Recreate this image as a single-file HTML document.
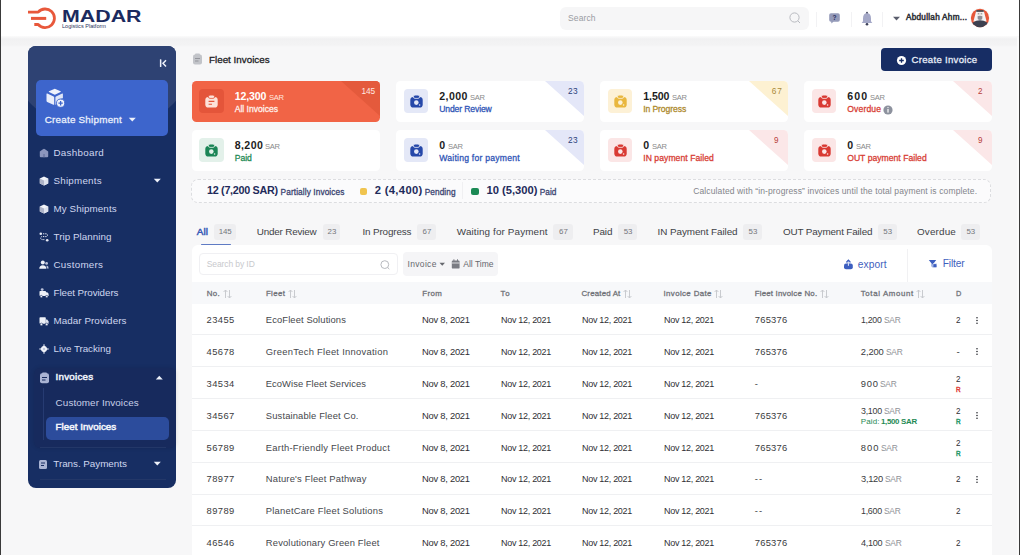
<!DOCTYPE html><html><head><meta charset="utf-8"><style>html,body{margin:0;padding:0}body{width:1020px;height:555px;overflow:hidden;position:relative;background:#f7f7f8;font-family:"Liberation Sans",sans-serif}</style></head><body>
<div style="position:absolute;left:0;top:36px;width:1020px;height:11px;background:linear-gradient(to bottom,#fbfbfb 0px,#f1f1f2 3px,#f3f3f4 9px,#f7f7f8 11px)"></div>
<div style="position:absolute;left:0;top:0;width:1020px;height:36px;background:#fff"></div>
<div style="position:absolute;left:0;top:0;width:1.3px;height:555px;background:#3a3a3a"></div>
<div style="position:absolute;left:1017.4px;top:37px;width:1.4px;height:518px;background:#fbfbfb"></div>
<div style="position:absolute;left:1018.8px;top:0;width:1.2px;height:555px;background:#3a3a3a"></div>
<svg style="position:absolute;left:26px;top:5px;" width="34" height="28" viewBox="0 0 34 28">
<path d="M2 7.1 H12.2 A9.3 9.3 0 1 1 12.2 19.5 H8.3" fill="none" stroke="#e8583b" stroke-width="2.8" stroke-linejoin="round"/>
<path d="M5 13.4 H20.2" fill="none" stroke="#e8583b" stroke-width="3"/>
</svg>
<svg style="position:absolute;left:60px;top:8px;" width="90" height="24" viewBox="0 0 90 24">
<text x="2" y="13.7" font-family="Liberation Sans" font-weight="700" font-size="16.5" fill="#1b2a5e" textLength="79.5" lengthAdjust="spacingAndGlyphs">MADAR</text>
<text x="2" y="20.3" font-family="Liberation Sans" font-weight="400" font-size="5.2" fill="#2c3560" textLength="44" lengthAdjust="spacingAndGlyphs">Logistics Platform</text>
</svg>
<div style="position:absolute;left:560px;top:6.5px;width:249px;height:23.5px;background:#f6f6f7;border-radius:6px;"></div>
<span style="position:absolute;left:568.00px;top:13.71px;font-size:8.5px;line-height:8.5px;font-weight:400;color:#9a9ca3;white-space:nowrap;letter-spacing:0.133px;">Search</span>
<svg style="position:absolute;left:788px;top:11px;" width="14" height="14" viewBox="0 0 14 14"><circle cx="6.5" cy="6.5" r="4.6" fill="none" stroke="#b8bac0" stroke-width="1"/><path d="M10 10 L12 12" stroke="#b8bac0" stroke-width="1"/></svg>
<div style="position:absolute;left:816px;top:12px;width:1px;height:15px;background:#f2f2f4;border-radius:0px;"></div>
<div style="position:absolute;left:851px;top:12px;width:1px;height:15px;background:#f2f2f4;border-radius:0px;"></div>
<div style="position:absolute;left:882px;top:12px;width:1px;height:15px;background:#f2f2f4;border-radius:0px;"></div>
<svg style="position:absolute;left:827.5px;top:12.2px;" width="13" height="13" viewBox="0 0 13 13"><path d="M1.2 3 Q1.2 1.2 3 1.2 H10 Q11.8 1.2 11.8 3 V8 Q11.8 9.8 10 9.8 H5.5 L3.3 11.6 V9.8 H3 Q1.2 9.8 1.2 8 Z" fill="#949ab9"/><text x="6.5" y="8.3" font-family="Liberation Sans" font-weight="700" font-size="6.6" fill="#27305e" text-anchor="middle">?</text></svg>
<svg style="position:absolute;left:861px;top:11px;" width="12" height="15" viewBox="0 0 12 15"><path d="M6 2 Q10 2.3 10 7.5 V10.3 L11.3 12 H0.7 L2 10.3 V7.5 Q2 2.3 6 2 Z" fill="#a4a8c7"/><circle cx="6" cy="13.3" r="1.3" fill="#3b3f58"/><circle cx="6" cy="1.6" r="0.9" fill="#3b3f58"/></svg>
<svg style="position:absolute;left:891.5px;top:15.8px;" width="9" height="6" viewBox="0 0 9 6"><path d="M1 0.8 H8 L4.5 4.5 Z" fill="#5a5d6c"/></svg>
<span style="position:absolute;left:906.00px;top:13.76px;font-size:8.2px;line-height:8.2px;font-weight:400;color:#303238;white-space:nowrap;letter-spacing:0.267px;-webkit-text-stroke:0.5px #303238;">Abdullah Ahm...</span>
<svg style="position:absolute;left:969.2px;top:7px;" width="22" height="22" viewBox="0 0 22 22">
<defs><clipPath id="av"><circle cx="11" cy="11" r="9.15"/></clipPath></defs>
<circle cx="11" cy="11" r="10.2" fill="#fafafa"/>
<circle cx="11" cy="11" r="9.15" fill="#e6583a"/>
<g clip-path="url(#av)">
<path d="M7.3 3.6 H14.7 L17.6 14.5 H4.4 Z" fill="#f3f3f4"/>
<rect x="7.2" y="3.2" width="7.6" height="1.5" rx="0.5" fill="#2b2c33"/>
<rect x="8.4" y="5.2" width="5.2" height="6.8" rx="1.5" fill="#efe9e4"/>
<path d="M8.8 6.8 H10.3 M11.7 6.8 H13.2" stroke="#55565e" stroke-width="0.7"/>
<path d="M8.6 9.3 Q11 8.4 13.4 9.3 L13.2 12.3 Q11 13.6 8.8 12.3 Z" fill="#8c8d95"/>
<path d="M0.5 23 Q1.5 13.6 11 13.3 Q20.5 13.6 21.5 23 Z" fill="#3d4150"/>
</g>
</svg>
<div style="position:absolute;left:28px;top:45.5px;width:148px;height:442px;border-radius:8px;overflow:hidden;background:#172e63"><div style="position:absolute;left:-25px;top:-109.5px;width:198px;height:198px;border-radius:50%;background:#2e4273"></div></div>
<svg style="position:absolute;left:158px;top:58px;" width="10" height="10" viewBox="0 0 10 10"><rect x="1.9" y="1.3" width="1.5" height="7.6" rx="0.5" fill="#eef1fa"/><path d="M8 2.2 L5 5.3 L8 8.4" fill="none" stroke="#eef1fa" stroke-width="1.5" stroke-linejoin="miter"/></svg>
<div style="position:absolute;left:36px;top:80px;width:132px;height:55.8px;background:#3d65cc;border-radius:5px;"></div>
<svg style="position:absolute;left:45px;top:88px;" width="21" height="20" viewBox="0 0 21 20">
<path d="M9.2 0.9 Q9.8 0.7 10.4 0.9 L15.6 3.3 Q16.2 3.7 15.6 4.1 L10.4 6.6 Q9.8 6.9 9.2 6.6 L4 4.1 Q3.4 3.7 4 3.3 Z" fill="#eef2fc"/>
<path d="M1.5 6 Q1.5 5.2 2.3 5.6 L8.6 8.4 Q9.2 8.7 9.2 9.4 V16.3 Q9.2 17.1 8.4 16.7 L2.2 13.9 Q1.5 13.5 1.5 12.8 Z" fill="#e9eefb"/>
<path d="M10.4 9.4 Q10.4 8.7 11 8.4 L17.2 5.6 Q17.9 5.3 17.9 6 V10.2 Q13 10.6 12 15.6 L11.2 16.6 Q10.4 17 10.4 16.2 Z" fill="#dfe6f8"/>
<circle cx="15.6" cy="15.2" r="4.1" fill="#eef2fc" stroke="#3d65cc" stroke-width="0.9"/>
<path d="M15.6 13 V17.4 M13.4 15.2 H17.8" stroke="#3d65cc" stroke-width="1.3"/>
</svg>
<span style="position:absolute;left:44.70px;top:114.50px;font-size:9.9px;line-height:9.9px;font-weight:400;color:#eaf0fc;white-space:nowrap;letter-spacing:0.214px;-webkit-text-stroke:0.28px #eaf0fc;">Create Shipment</span>
<svg style="position:absolute;left:128px;top:116.5px;" width="9" height="6" viewBox="0 0 9 6"><path d="M0.8 0.8 H7.8 L4.3 4.6 Z" fill="#eef2fb"/></svg>
<span style="position:absolute;left:53.50px;top:147.55px;font-size:9.8px;line-height:9.8px;font-weight:400;color:#cfd6ef;white-space:nowrap;letter-spacing:0.295px;">Dashboard</span>
<svg style="position:absolute;left:38.5px;top:147.7px;" width="10" height="10" viewBox="0 0 10 10"><path d="M5 0.8 Q5.5 0.8 6 1.2 L9.2 3.6 V8.2 Q9.2 9.2 8.2 9.2 H1.8 Q0.8 9.2 0.8 8.2 V3.6 L4 1.2 Q4.5 0.8 5 0.8 Z" fill="#8c96bd"/><rect x="4.2" y="6" width="1.6" height="3.2" fill="#6f7aa6"/></svg>
<span style="position:absolute;left:53.50px;top:175.85px;font-size:9.8px;line-height:9.8px;font-weight:400;color:#cfd6ef;white-space:nowrap;letter-spacing:0.225px;">Shipments</span>
<svg style="position:absolute;left:38.5px;top:176.0px;" width="10" height="10" viewBox="0 0 10 10"><path d="M5 0.6 L9.2 2.6 V7.4 L5 9.4 L0.8 7.4 V2.6 Z" fill="#f2f4fa"/><path d="M0.8 2.6 L5 4.6 V9.4 L0.8 7.4 Z" fill="#aeb4c8"/><path d="M5 4.6 L9.2 2.6 V7.4 L5 9.4 Z" fill="#dfe3ee"/></svg>
<span style="position:absolute;left:53.50px;top:203.95px;font-size:9.8px;line-height:9.8px;font-weight:400;color:#cfd6ef;white-space:nowrap;letter-spacing:0.093px;">My Shipments</span>
<svg style="position:absolute;left:38.5px;top:204.1px;" width="10" height="10" viewBox="0 0 10 10"><path d="M5 0.6 L9.2 2.6 V7.4 L5 9.4 L0.8 7.4 V2.6 Z" fill="#f2f4fa"/><path d="M0.8 2.6 L5 4.6 V9.4 L0.8 7.4 Z" fill="#aeb4c8"/><path d="M5 4.6 L9.2 2.6 V7.4 L5 9.4 Z" fill="#dfe3ee"/></svg>
<span style="position:absolute;left:53.50px;top:231.85px;font-size:9.8px;line-height:9.8px;font-weight:400;color:#cfd6ef;white-space:nowrap;letter-spacing:0.044px;">Trip Planning</span>
<svg style="position:absolute;left:38.5px;top:232.0px;" width="10" height="10" viewBox="0 0 10 10"><circle cx="1.8" cy="1.8" r="1.3" fill="#e6eaf5"/><circle cx="8.2" cy="8.2" r="1.3" fill="#e6eaf5"/><path d="M4 1.8 H7 Q8.5 1.8 8.5 3.2 Q8.5 4.6 7 4.6 H3.2 Q1.7 4.6 1.7 6.1 Q1.7 7.6 3.2 7.6 H6" fill="none" stroke="#e6eaf5" stroke-width="1" stroke-dasharray="1.3 0.9"/></svg>
<span style="position:absolute;left:53.50px;top:259.95px;font-size:9.8px;line-height:9.8px;font-weight:400;color:#cfd6ef;white-space:nowrap;letter-spacing:0.266px;">Customers</span>
<svg style="position:absolute;left:38.5px;top:260.09999999999997px;" width="10" height="10" viewBox="0 0 10 10"><circle cx="3.8" cy="2.6" r="2" fill="#eef1f8"/><path d="M0.3 8.8 Q0.3 5.3 3.8 5.3 Q7.3 5.3 7.3 8.8 Z" fill="#eef1f8"/><circle cx="7.6" cy="3.4" r="1.4" fill="#b9c0d8"/><path d="M7.5 5.6 Q9.7 5.8 9.7 8.6 H7.8 Z" fill="#b9c0d8"/></svg>
<span style="position:absolute;left:53.50px;top:288.05px;font-size:9.8px;line-height:9.8px;font-weight:400;color:#cfd6ef;white-space:nowrap;letter-spacing:-0.064px;">Fleet Providers</span>
<svg style="position:absolute;left:38.5px;top:288.2px;" width="10" height="10" viewBox="0 0 10 10"><rect x="0.5" y="3" width="6.5" height="5" rx="0.8" fill="#eef1f8"/><path d="M7 4.2 H8.3 L9.6 5.8 V8 H7 Z" fill="#eef1f8"/><circle cx="2.3" cy="8.6" r="1.2" fill="#eef1f8" stroke="#192d63" stroke-width="0.6"/><circle cx="7.8" cy="8.6" r="1.2" fill="#eef1f8" stroke="#192d63" stroke-width="0.6"/><circle cx="3.2" cy="1.6" r="1.4" fill="#b9c0d8"/></svg>
<span style="position:absolute;left:53.50px;top:315.85px;font-size:9.8px;line-height:9.8px;font-weight:400;color:#cfd6ef;white-space:nowrap;letter-spacing:0.073px;">Madar Providers</span>
<svg style="position:absolute;left:38.5px;top:316.0px;" width="10" height="10" viewBox="0 0 10 10"><rect x="0.5" y="1.2" width="6.3" height="6.6" rx="0.8" fill="#eef1f8"/><path d="M6.8 3.5 H8.2 L9.6 5.4 V7.8 H6.8 Z" fill="#dfe3ee"/><circle cx="2.4" cy="8.4" r="1.3" fill="#eef1f8" stroke="#192d63" stroke-width="0.6"/><circle cx="7.7" cy="8.4" r="1.3" fill="#eef1f8" stroke="#192d63" stroke-width="0.6"/></svg>
<span style="position:absolute;left:53.50px;top:343.85px;font-size:9.8px;line-height:9.8px;font-weight:400;color:#cfd6ef;white-space:nowrap;letter-spacing:-0.028px;">Live Tracking</span>
<svg style="position:absolute;left:38.5px;top:344.0px;" width="10" height="10" viewBox="0 0 10 10"><path d="M5 0.2 V9.8 M0.2 5 H9.8" stroke="#dfe4f2" stroke-width="1.1"/><path d="M5 1.4 L8.6 5 L5 8.6 L1.4 5 Z" fill="#eef1f8"/><circle cx="5" cy="5" r="2.9" fill="#eef1f8"/><circle cx="5" cy="5" r="1.1" fill="#b9c0d8"/></svg>
<svg style="position:absolute;left:153px;top:178px;" width="9" height="6" viewBox="0 0 9 6"><path d="M0.8 0.8 H7.8 L4.3 4.6 Z" fill="#eef2fb"/></svg>
<div style="position:absolute;left:34.3px;top:367.6px;width:141.5px;height:80px;background:#172a5d;border-radius:6px;box-shadow:0 0 4px rgba(0,0,0,0.12)"></div>
<svg style="position:absolute;left:38.5px;top:371.5px;" width="11" height="12" viewBox="0 0 11 12"><rect x="1" y="1.3" width="9" height="10" rx="2" fill="#a9b3d3"/><rect x="3" y="0.5" width="5" height="2" rx="1" fill="#a9b3d3"/><path d="M3 5.5 H8 M3 8 H6.5" stroke="#172a5d" stroke-width="1"/></svg>
<span style="position:absolute;left:55.60px;top:372.35px;font-size:9.8px;line-height:9.8px;font-weight:400;color:#eef2fb;white-space:nowrap;letter-spacing:0.235px;-webkit-text-stroke:0.5px #eef2fb;">Invoices</span>
<svg style="position:absolute;left:155px;top:374.5px;" width="9" height="6" viewBox="0 0 9 6"><path d="M0.8 4.6 H7.8 L4.3 0.8 Z" fill="#eef2fb"/></svg>
<div style="position:absolute;left:42.8px;top:388px;width:1px;height:52px;background:#263b72;border-radius:0px;"></div>
<span style="position:absolute;left:55.60px;top:398.00px;font-size:9.9px;line-height:9.9px;font-weight:400;color:#c9d0e8;white-space:nowrap;letter-spacing:0.082px;">Customer Invoices</span>
<div style="position:absolute;left:45.7px;top:416.5px;width:123px;height:23.2px;background:#2c4c9c;border-radius:5px;"></div>
<span style="position:absolute;left:55.60px;top:421.85px;font-size:9.8px;line-height:9.8px;font-weight:400;color:#f4f6fc;white-space:nowrap;letter-spacing:0.011px;-webkit-text-stroke:0.5px #f4f6fc;">Fleet Invoices</span>
<div style="position:absolute;left:40px;top:446.5px;width:126px;height:1px;background:#233768;border-radius:0px;"></div>
<svg style="position:absolute;left:38px;top:458.5px;" width="11" height="11" viewBox="0 0 11 11"><rect x="1" y="1" width="8" height="9" rx="1.5" fill="#a9b3d3"/><path d="M3 4 H7 M3 6.5 H6" stroke="#192d63" stroke-width="1"/></svg>
<span style="position:absolute;left:53.30px;top:458.80px;font-size:9.9px;line-height:9.9px;font-weight:400;color:#cfd6ef;white-space:nowrap;letter-spacing:-0.049px;">Trans. Payments</span>
<svg style="position:absolute;left:153px;top:461px;" width="9" height="6" viewBox="0 0 9 6"><path d="M0.8 0.8 H7.8 L4.3 4.6 Z" fill="#eef2fb"/></svg>
<div style="position:absolute;left:40px;top:479.2px;width:126px;height:1px;background:#233768;border-radius:0px;"></div>
<svg style="position:absolute;left:192px;top:53px;" width="11" height="12" viewBox="0 0 11 12"><rect x="1" y="1.5" width="9" height="10" rx="2" fill="#c2c4c9"/><rect x="3" y="0.5" width="5" height="2.2" rx="1" fill="#c2c4c9"/><path d="M3 5.5 H8 M3 8 H6.5" stroke="#8e9096" stroke-width="0.9"/></svg>
<span style="position:absolute;left:209.00px;top:54.50px;font-size:9.8px;line-height:9.8px;font-weight:400;color:#202124;white-space:nowrap;letter-spacing:0.011px;-webkit-text-stroke:0.28px #202124;">Fleet Invoices</span>
<div style="position:absolute;left:881px;top:48.1px;width:111px;height:22.7px;background:#172d64;border-radius:4px;"></div>
<svg style="position:absolute;left:896px;top:55px;" width="11" height="11" viewBox="0 0 11 11"><circle cx="5.5" cy="5.5" r="4.6" fill="#fff"/><path d="M5.5 3.2 V7.8 M3.2 5.5 H7.8" stroke="#172d64" stroke-width="1.3"/></svg>
<span style="position:absolute;left:911.50px;top:54.55px;font-size:9.6px;line-height:9.6px;font-weight:400;color:#e8edf8;white-space:nowrap;letter-spacing:0.288px;-webkit-text-stroke:0.28px #e8edf8;">Create Invoice</span>
<div style="position:absolute;left:191.5px;top:81px;width:188px;height:41px;background:#f16446;border-radius:4.5px;overflow:hidden"><svg style="position:absolute;right:0;top:0" width="40" height="36"><path d="M1 0 H40 V35 Z" fill="#e45a3c"/></svg></div>
<div style="position:absolute;left:199.2px;top:89.1px;width:24.8px;height:24.3px;background:#e4553a;border-radius:4px;"></div>
<svg style="position:absolute;left:205.4px;top:95.2px;" width="13" height="14" viewBox="0 0 13 14"><path d="M0.3 5 Q0.3 1.9 3.4 1.9 H9.6 Q12.7 1.9 12.7 5 V9.4 Q12.7 12.5 9.6 12.5 H3.4 Q0.3 12.5 0.3 9.4 Z" fill="#fde3da"/><rect x="3.4" y="0.1" width="6.2" height="3.3" rx="1.6" fill="#fde3da" stroke="#e4553a" stroke-width="0.8"/><path d="M3.6 6.4 H9.4 M3.6 9.2 H7" stroke="#e4553a" stroke-width="1.1"/></svg>
<span style="position:absolute;left:234.70px;top:91.45px;font-size:10.6px;line-height:10.6px;font-weight:700;color:#fff;white-space:nowrap;letter-spacing:-0.121px;">12,300</span>
<span style="position:absolute;left:268.90px;top:93.86px;font-size:7.8px;line-height:7.8px;font-weight:400;color:#ffe7df;white-space:nowrap;letter-spacing:-0.300px;transform:scaleX(0.9766);transform-origin:0 50%;">SAR</span>
<span style="position:absolute;left:234.70px;top:104.76px;font-size:8.6px;line-height:8.6px;font-weight:400;color:#fff1ec;white-space:nowrap;letter-spacing:-0.006px;-webkit-text-stroke:0.28px #fff1ec;">All Invoices</span>
<span style="position:absolute;left:361.50px;top:86.61px;font-size:8.3px;line-height:8.3px;font-weight:400;color:#ffe9e2;white-space:nowrap;letter-spacing:-0.122px;">145</span>
<div style="position:absolute;left:396px;top:81px;width:188px;height:41px;background:#fff;border-radius:4.5px;overflow:hidden"><svg style="position:absolute;right:0;top:0" width="40" height="36"><path d="M1 0 H40 V35 Z" fill="#e4e7f8"/></svg></div>
<div style="position:absolute;left:403.7px;top:89.1px;width:24.8px;height:24.3px;background:#e4e8f7;border-radius:4px;"></div>
<svg style="position:absolute;left:409.9px;top:95.2px;" width="13" height="14" viewBox="0 0 13 14"><path d="M0.3 5 Q0.3 1.9 3.4 1.9 H9.6 Q12.7 1.9 12.7 5 V9.4 Q12.7 12.5 9.6 12.5 H3.4 Q0.3 12.5 0.3 9.4 Z" fill="#2648a9"/><rect x="3.4" y="0.1" width="6.2" height="3.3" rx="1.6" fill="#2648a9" stroke="#e4e8f7" stroke-width="0.8"/><circle cx="6.3" cy="7.6" r="2.3" fill="#e4e8f7"/><circle cx="9.6" cy="10" r="0.8" fill="#e4e8f7"/></svg>
<span style="position:absolute;left:439.20px;top:91.45px;font-size:10.6px;line-height:10.6px;font-weight:700;color:#1c1c1c;white-space:nowrap;letter-spacing:0.446px;">2,000</span>
<span style="position:absolute;left:469.90px;top:93.86px;font-size:7.8px;line-height:7.8px;font-weight:400;color:#8a8a8a;white-space:nowrap;letter-spacing:-0.300px;transform:scaleX(0.9766);transform-origin:0 50%;">SAR</span>
<span style="position:absolute;left:439.20px;top:104.76px;font-size:8.6px;line-height:8.6px;font-weight:400;color:#2f55b6;white-space:nowrap;letter-spacing:-0.126px;-webkit-text-stroke:0.28px #2f55b6;">Under Review</span>
<span style="position:absolute;left:568.00px;top:86.61px;font-size:8.3px;line-height:8.3px;font-weight:400;color:#2a3f7a;white-space:nowrap;letter-spacing:0.366px;">23</span>
<div style="position:absolute;left:600px;top:81px;width:188px;height:41px;background:#fff;border-radius:4.5px;overflow:hidden"><svg style="position:absolute;right:0;top:0" width="40" height="36"><path d="M1 0 H40 V35 Z" fill="#fdf1d2"/></svg></div>
<div style="position:absolute;left:607.7px;top:89.1px;width:24.8px;height:24.3px;background:#fdf1d6;border-radius:4px;"></div>
<svg style="position:absolute;left:613.9px;top:95.2px;" width="13" height="14" viewBox="0 0 13 14"><path d="M0.3 5 Q0.3 1.9 3.4 1.9 H9.6 Q12.7 1.9 12.7 5 V9.4 Q12.7 12.5 9.6 12.5 H3.4 Q0.3 12.5 0.3 9.4 Z" fill="#e9b73e"/><rect x="3.4" y="0.1" width="6.2" height="3.3" rx="1.6" fill="#e9b73e" stroke="#fdf1d6" stroke-width="0.8"/><circle cx="6.3" cy="7.6" r="2.3" fill="#fdf1d6"/><circle cx="9.6" cy="10" r="0.8" fill="#fdf1d6"/></svg>
<span style="position:absolute;left:643.20px;top:91.45px;font-size:10.6px;line-height:10.6px;font-weight:700;color:#1c1c1c;white-space:nowrap;letter-spacing:-0.054px;">1,500</span>
<span style="position:absolute;left:671.90px;top:93.86px;font-size:7.8px;line-height:7.8px;font-weight:400;color:#8a8a8a;white-space:nowrap;letter-spacing:-0.300px;transform:scaleX(0.9766);transform-origin:0 50%;">SAR</span>
<span style="position:absolute;left:643.20px;top:104.76px;font-size:8.6px;line-height:8.6px;font-weight:400;color:#ad892c;white-space:nowrap;letter-spacing:-0.095px;-webkit-text-stroke:0.28px #ad892c;">In Progress</span>
<span style="position:absolute;left:771.65px;top:86.61px;font-size:8.3px;line-height:8.3px;font-weight:400;color:#a98a3a;white-space:nowrap;letter-spacing:1.066px;">67</span>
<div style="position:absolute;left:804px;top:81px;width:188px;height:41px;background:#fff;border-radius:4.5px;overflow:hidden"><svg style="position:absolute;right:0;top:0" width="40" height="36"><path d="M1 0 H40 V35 Z" fill="#fbe7e8"/></svg></div>
<div style="position:absolute;left:811.7px;top:89.1px;width:24.8px;height:24.3px;background:#fbe6e6;border-radius:4px;"></div>
<svg style="position:absolute;left:817.9px;top:95.2px;" width="13" height="14" viewBox="0 0 13 14"><path d="M0.3 5 Q0.3 1.9 3.4 1.9 H9.6 Q12.7 1.9 12.7 5 V9.4 Q12.7 12.5 9.6 12.5 H3.4 Q0.3 12.5 0.3 9.4 Z" fill="#d93a33"/><rect x="3.4" y="0.1" width="6.2" height="3.3" rx="1.6" fill="#d93a33" stroke="#fbe6e6" stroke-width="0.8"/><circle cx="6.3" cy="7.6" r="2.3" fill="#fbe6e6"/><circle cx="9.6" cy="10" r="0.8" fill="#fbe6e6"/></svg>
<span style="position:absolute;left:847.20px;top:91.45px;font-size:10.6px;line-height:10.6px;font-weight:700;color:#1c1c1c;white-space:nowrap;letter-spacing:1.200px;">600</span>
<span style="position:absolute;left:870.00px;top:93.86px;font-size:7.8px;line-height:7.8px;font-weight:400;color:#8a8a8a;white-space:nowrap;letter-spacing:-0.300px;transform:scaleX(0.9766);transform-origin:0 50%;">SAR</span>
<span style="position:absolute;left:847.20px;top:104.76px;font-size:8.6px;line-height:8.6px;font-weight:400;color:#d73d34;white-space:nowrap;letter-spacing:0.155px;-webkit-text-stroke:0.28px #d73d34;">Overdue</span>
<span style="position:absolute;left:978.25px;top:86.61px;font-size:8.3px;line-height:8.3px;font-weight:400;color:#b8403a;white-space:nowrap;transform:scaleX(0.9730);transform-origin:0 50%;">2</span>
<div style="position:absolute;left:191.5px;top:130px;width:188px;height:40.5px;background:#fff;border-radius:4.5px;overflow:hidden"></div>
<div style="position:absolute;left:199.2px;top:138.1px;width:24.8px;height:24.3px;background:#e3f1ea;border-radius:4px;"></div>
<svg style="position:absolute;left:205.4px;top:144.2px;" width="13" height="14" viewBox="0 0 13 14"><path d="M0.3 5 Q0.3 1.9 3.4 1.9 H9.6 Q12.7 1.9 12.7 5 V9.4 Q12.7 12.5 9.6 12.5 H3.4 Q0.3 12.5 0.3 9.4 Z" fill="#1b8556"/><rect x="3.4" y="0.1" width="6.2" height="3.3" rx="1.6" fill="#1b8556" stroke="#e3f1ea" stroke-width="0.8"/><circle cx="6.3" cy="7.6" r="2.3" fill="#e3f1ea"/><circle cx="9.6" cy="10" r="0.8" fill="#e3f1ea"/></svg>
<span style="position:absolute;left:234.70px;top:140.45px;font-size:10.6px;line-height:10.6px;font-weight:700;color:#1c1c1c;white-space:nowrap;letter-spacing:0.421px;">8,200</span>
<span style="position:absolute;left:265.30px;top:142.86px;font-size:7.8px;line-height:7.8px;font-weight:400;color:#8a8a8a;white-space:nowrap;letter-spacing:-0.300px;transform:scaleX(0.9766);transform-origin:0 50%;">SAR</span>
<span style="position:absolute;left:234.70px;top:153.76px;font-size:8.6px;line-height:8.6px;font-weight:400;color:#1f8a55;white-space:nowrap;letter-spacing:-0.034px;-webkit-text-stroke:0.28px #1f8a55;">Paid</span>
<div style="position:absolute;left:396px;top:130px;width:188px;height:40.5px;background:#fff;border-radius:4.5px;overflow:hidden"><svg style="position:absolute;right:0;top:0" width="40" height="36"><path d="M1 0 H40 V35 Z" fill="#e4e7f8"/></svg></div>
<div style="position:absolute;left:403.7px;top:138.1px;width:24.8px;height:24.3px;background:#e4e8f7;border-radius:4px;"></div>
<svg style="position:absolute;left:409.9px;top:144.2px;" width="13" height="14" viewBox="0 0 13 14"><path d="M0.3 5 Q0.3 1.9 3.4 1.9 H9.6 Q12.7 1.9 12.7 5 V9.4 Q12.7 12.5 9.6 12.5 H3.4 Q0.3 12.5 0.3 9.4 Z" fill="#2648a9"/><rect x="3.4" y="0.1" width="6.2" height="3.3" rx="1.6" fill="#2648a9" stroke="#e4e8f7" stroke-width="0.8"/><circle cx="6.3" cy="7.6" r="2.3" fill="#e4e8f7"/><circle cx="9.6" cy="10" r="0.8" fill="#e4e8f7"/></svg>
<span style="position:absolute;left:439.20px;top:140.45px;font-size:10.6px;line-height:10.6px;font-weight:700;color:#1c1c1c;white-space:nowrap;">0</span>
<span style="position:absolute;left:448.40px;top:142.86px;font-size:7.8px;line-height:7.8px;font-weight:400;color:#8a8a8a;white-space:nowrap;letter-spacing:-0.300px;transform:scaleX(0.9766);transform-origin:0 50%;">SAR</span>
<span style="position:absolute;left:439.20px;top:153.76px;font-size:8.6px;line-height:8.6px;font-weight:400;color:#2f55b6;white-space:nowrap;letter-spacing:0.244px;-webkit-text-stroke:0.28px #2f55b6;">Waiting for payment</span>
<span style="position:absolute;left:568.00px;top:135.61px;font-size:8.3px;line-height:8.3px;font-weight:400;color:#2a3f7a;white-space:nowrap;letter-spacing:0.366px;">23</span>
<div style="position:absolute;left:600px;top:130px;width:188px;height:40.5px;background:#fff;border-radius:4.5px;overflow:hidden"><svg style="position:absolute;right:0;top:0" width="40" height="36"><path d="M1 0 H40 V35 Z" fill="#fbe7e8"/></svg></div>
<div style="position:absolute;left:607.7px;top:138.1px;width:24.8px;height:24.3px;background:#fbe6e6;border-radius:4px;"></div>
<svg style="position:absolute;left:613.9px;top:144.2px;" width="13" height="14" viewBox="0 0 13 14"><path d="M0.3 5 Q0.3 1.9 3.4 1.9 H9.6 Q12.7 1.9 12.7 5 V9.4 Q12.7 12.5 9.6 12.5 H3.4 Q0.3 12.5 0.3 9.4 Z" fill="#d93a33"/><rect x="3.4" y="0.1" width="6.2" height="3.3" rx="1.6" fill="#d93a33" stroke="#fbe6e6" stroke-width="0.8"/><circle cx="6.3" cy="7.6" r="2.3" fill="#fbe6e6"/><circle cx="9.6" cy="10" r="0.8" fill="#fbe6e6"/></svg>
<span style="position:absolute;left:643.20px;top:140.45px;font-size:10.6px;line-height:10.6px;font-weight:700;color:#1c1c1c;white-space:nowrap;">0</span>
<span style="position:absolute;left:652.40px;top:142.86px;font-size:7.8px;line-height:7.8px;font-weight:400;color:#8a8a8a;white-space:nowrap;letter-spacing:-0.300px;transform:scaleX(0.9766);transform-origin:0 50%;">SAR</span>
<span style="position:absolute;left:643.20px;top:153.76px;font-size:8.6px;line-height:8.6px;font-weight:400;color:#d73d34;white-space:nowrap;letter-spacing:0.059px;-webkit-text-stroke:0.28px #d73d34;">IN payment Failed</span>
<span style="position:absolute;left:774.25px;top:135.61px;font-size:8.3px;line-height:8.3px;font-weight:400;color:#b8403a;white-space:nowrap;transform:scaleX(0.9730);transform-origin:0 50%;">9</span>
<div style="position:absolute;left:804px;top:130px;width:188px;height:40.5px;background:#fff;border-radius:4.5px;overflow:hidden"><svg style="position:absolute;right:0;top:0" width="40" height="36"><path d="M1 0 H40 V35 Z" fill="#fbe7e8"/></svg></div>
<div style="position:absolute;left:811.7px;top:138.1px;width:24.8px;height:24.3px;background:#fbe6e6;border-radius:4px;"></div>
<svg style="position:absolute;left:817.9px;top:144.2px;" width="13" height="14" viewBox="0 0 13 14"><path d="M0.3 5 Q0.3 1.9 3.4 1.9 H9.6 Q12.7 1.9 12.7 5 V9.4 Q12.7 12.5 9.6 12.5 H3.4 Q0.3 12.5 0.3 9.4 Z" fill="#d93a33"/><rect x="3.4" y="0.1" width="6.2" height="3.3" rx="1.6" fill="#d93a33" stroke="#fbe6e6" stroke-width="0.8"/><circle cx="6.3" cy="7.6" r="2.3" fill="#fbe6e6"/><circle cx="9.6" cy="10" r="0.8" fill="#fbe6e6"/></svg>
<span style="position:absolute;left:847.20px;top:140.45px;font-size:10.6px;line-height:10.6px;font-weight:700;color:#1c1c1c;white-space:nowrap;">0</span>
<span style="position:absolute;left:856.40px;top:142.86px;font-size:7.8px;line-height:7.8px;font-weight:400;color:#8a8a8a;white-space:nowrap;letter-spacing:-0.300px;transform:scaleX(0.9766);transform-origin:0 50%;">SAR</span>
<span style="position:absolute;left:847.20px;top:153.76px;font-size:8.6px;line-height:8.6px;font-weight:400;color:#d73d34;white-space:nowrap;letter-spacing:0.021px;-webkit-text-stroke:0.28px #d73d34;">OUT payment Failed</span>
<span style="position:absolute;left:978.25px;top:135.61px;font-size:8.3px;line-height:8.3px;font-weight:400;color:#b8403a;white-space:nowrap;transform:scaleX(0.9730);transform-origin:0 50%;">9</span>
<svg style="position:absolute;left:883px;top:104.5px;" width="10" height="10" viewBox="0 0 10 10"><circle cx="5" cy="5" r="4.6" fill="#8d929e"/><rect x="4.4" y="4" width="1.2" height="3.6" fill="#fff"/><circle cx="5" cy="2.6" r="0.7" fill="#fff"/></svg>
<div style="position:absolute;left:191px;top:178.8px;width:800px;height:24px;border:1px dashed #dcdde0;border-radius:7px;background:#fbfbfc;box-sizing:border-box"></div>
<span style="position:absolute;left:207.00px;top:185.14px;font-size:11.2px;line-height:11.2px;font-weight:700;color:#1f2b5b;white-space:nowrap;letter-spacing:-0.300px;transform:scaleX(0.9627);transform-origin:0 50%;">12 (7,200 SAR)</span>
<span style="position:absolute;left:280.60px;top:187.51px;font-size:8.3px;line-height:8.3px;font-weight:400;color:#3a4470;white-space:nowrap;letter-spacing:0.090px;-webkit-text-stroke:0.28px #3a4470;">Partially Invoices</span>
<div style="position:absolute;left:360px;top:188px;width:7.4px;height:7.4px;background:#f0c44f;border-radius:2px;"></div>
<span style="position:absolute;left:374.70px;top:185.14px;font-size:11.2px;line-height:11.2px;font-weight:700;color:#1f2b5b;white-space:nowrap;letter-spacing:0.352px;">2 (4,400)</span>
<span style="position:absolute;left:424.70px;top:187.51px;font-size:8.3px;line-height:8.3px;font-weight:400;color:#3a4470;white-space:nowrap;letter-spacing:0.074px;-webkit-text-stroke:0.28px #3a4470;">Pending</span>
<div style="position:absolute;left:462.4px;top:182px;width:1px;height:17px;background:#f0f0f2;border-radius:0px;"></div>
<div style="position:absolute;left:471.2px;top:187.8px;width:7.4px;height:7.4px;background:#1c8a55;border-radius:2px;"></div>
<span style="position:absolute;left:486.50px;top:185.14px;font-size:11.2px;line-height:11.2px;font-weight:700;color:#1f2b5b;white-space:nowrap;letter-spacing:-0.011px;">10 (5,300)</span>
<span style="position:absolute;left:539.70px;top:187.51px;font-size:8.3px;line-height:8.3px;font-weight:400;color:#3a4470;white-space:nowrap;letter-spacing:0.064px;-webkit-text-stroke:0.28px #3a4470;">Paid</span>
<span style="position:absolute;left:693.20px;top:187.01px;font-size:8.5px;line-height:8.5px;font-weight:400;color:#83858b;white-space:nowrap;letter-spacing:0.127px;">Calculated with “in-progress” invoices until the total payment is complete.</span>
<span style="position:absolute;left:196.80px;top:226.60px;font-size:9.9px;line-height:9.9px;font-weight:400;color:#3a5ab6;white-space:nowrap;letter-spacing:0.108px;-webkit-text-stroke:0.5px #3a5ab6;">All</span>
<div style="position:absolute;left:213.7px;top:224px;width:21.900000000000006px;height:15.7px;background:#eeeef0;border-radius:3px;"></div>
<span style="position:absolute;left:218.74px;top:227.61px;font-size:7.9px;line-height:7.9px;font-weight:400;color:#75777d;white-space:nowrap;letter-spacing:-0.091px;">145</span>
<span style="position:absolute;left:256.80px;top:226.60px;font-size:9.9px;line-height:9.9px;font-weight:400;color:#404246;white-space:nowrap;letter-spacing:-0.203px;">Under Review</span>
<div style="position:absolute;left:322.6px;top:224px;width:17.69999999999999px;height:15.7px;background:#eeeef0;border-radius:3px;"></div>
<span style="position:absolute;left:327.61px;top:227.61px;font-size:7.9px;line-height:7.9px;font-weight:400;color:#75777d;white-space:nowrap;letter-spacing:0.079px;">23</span>
<span style="position:absolute;left:362.40px;top:226.60px;font-size:9.9px;line-height:9.9px;font-weight:400;color:#404246;white-space:nowrap;letter-spacing:-0.140px;">In Progress</span>
<div style="position:absolute;left:417px;top:224px;width:18.899999999999977px;height:15.7px;background:#eeeef0;border-radius:3px;"></div>
<span style="position:absolute;left:422.61px;top:227.61px;font-size:7.9px;line-height:7.9px;font-weight:400;color:#75777d;white-space:nowrap;letter-spacing:0.079px;">67</span>
<span style="position:absolute;left:456.80px;top:226.60px;font-size:9.9px;line-height:9.9px;font-weight:400;color:#404246;white-space:nowrap;letter-spacing:0.125px;">Waiting for Payment</span>
<div style="position:absolute;left:553px;top:224px;width:19.600000000000023px;height:15.7px;background:#eeeef0;border-radius:3px;"></div>
<span style="position:absolute;left:558.96px;top:227.61px;font-size:7.9px;line-height:7.9px;font-weight:400;color:#75777d;white-space:nowrap;letter-spacing:0.079px;">67</span>
<span style="position:absolute;left:593.00px;top:226.60px;font-size:9.9px;line-height:9.9px;font-weight:400;color:#404246;white-space:nowrap;letter-spacing:-0.122px;">Paid</span>
<div style="position:absolute;left:618.2px;top:224px;width:18.59999999999991px;height:15.7px;background:#eeeef0;border-radius:3px;"></div>
<span style="position:absolute;left:623.66px;top:227.61px;font-size:7.9px;line-height:7.9px;font-weight:400;color:#75777d;white-space:nowrap;letter-spacing:0.079px;">53</span>
<span style="position:absolute;left:657.60px;top:226.60px;font-size:9.9px;line-height:9.9px;font-weight:400;color:#404246;white-space:nowrap;letter-spacing:-0.077px;">IN Payment Failed</span>
<div style="position:absolute;left:743px;top:224px;width:18.799999999999955px;height:15.7px;background:#eeeef0;border-radius:3px;"></div>
<span style="position:absolute;left:748.56px;top:227.61px;font-size:7.9px;line-height:7.9px;font-weight:400;color:#75777d;white-space:nowrap;letter-spacing:0.079px;">53</span>
<span style="position:absolute;left:783.00px;top:226.60px;font-size:9.9px;line-height:9.9px;font-weight:400;color:#404246;white-space:nowrap;letter-spacing:-0.149px;">OUT Payment Failed</span>
<div style="position:absolute;left:877.6px;top:224px;width:19.0px;height:15.7px;background:#eeeef0;border-radius:3px;"></div>
<span style="position:absolute;left:883.26px;top:227.61px;font-size:7.9px;line-height:7.9px;font-weight:400;color:#75777d;white-space:nowrap;letter-spacing:0.079px;">53</span>
<span style="position:absolute;left:917.00px;top:226.60px;font-size:9.9px;line-height:9.9px;font-weight:400;color:#404246;white-space:nowrap;letter-spacing:0.152px;">Overdue</span>
<div style="position:absolute;left:960.5px;top:224px;width:19.5px;height:15.7px;background:#eeeef0;border-radius:3px;"></div>
<span style="position:absolute;left:966.41px;top:227.61px;font-size:7.9px;line-height:7.9px;font-weight:400;color:#75777d;white-space:nowrap;letter-spacing:0.079px;">53</span>
<div style="position:absolute;left:200.8px;top:243.7px;width:30.2px;height:1.8px;background:#5f7bc4;border-radius:1px;"></div>
<div style="position:absolute;left:191.6px;top:245.4px;width:800.4px;height:320px;background:#ffffff;border-radius:6px"></div>
<div style="position:absolute;left:199px;top:253px;width:198.6px;height:22px;background:#fff;border:1px solid #f0f0f3;border-radius:4px;box-sizing:border-box"></div>
<span style="position:absolute;left:206.70px;top:259.71px;font-size:8.5px;line-height:8.5px;font-weight:400;color:#c8c9cd;white-space:nowrap;letter-spacing:-0.095px;">Search by ID</span>
<svg style="position:absolute;left:379px;top:258.5px;" width="12" height="12" viewBox="0 0 12 12"><circle cx="5.8" cy="5.6" r="3.9" fill="none" stroke="#b3b5ba" stroke-width="0.95"/><path d="M8.7 8.5 L10.3 10.1" stroke="#b3b5ba" stroke-width="1"/></svg>
<div style="position:absolute;left:402.5px;top:252.3px;width:95.8px;height:23.9px;background:#f5f5f7;border-radius:4px;"></div>
<span style="position:absolute;left:407.60px;top:259.91px;font-size:8.5px;line-height:8.5px;font-weight:400;color:#66686e;white-space:nowrap;letter-spacing:0.310px;">Invoice</span>
<svg style="position:absolute;left:438.5px;top:261.5px;" width="7" height="5" viewBox="0 0 7 5"><path d="M0.5 0.8 H6 L3.25 3.8 Z" fill="#66686e"/></svg>
<svg style="position:absolute;left:450.5px;top:259px;" width="10" height="11" viewBox="0 0 10 11"><rect x="0.8" y="1.6" width="7.8" height="8" rx="1.2" fill="#7a7c83"/><path d="M0.8 4 H8.6" stroke="#f5f5f7" stroke-width="0.8"/><rect x="2.4" y="0.3" width="1" height="2.4" fill="#7a7c83"/><rect x="6" y="0.3" width="1" height="2.4" fill="#7a7c83"/></svg>
<span style="position:absolute;left:463.30px;top:259.91px;font-size:8.5px;line-height:8.5px;font-weight:400;color:#66686e;white-space:nowrap;letter-spacing:0.009px;">All Time</span>
<div style="position:absolute;left:907px;top:249px;width:1px;height:33px;background:#f1f1f3;border-radius:0px;"></div>
<svg style="position:absolute;left:842.5px;top:258.5px;" width="11" height="11" viewBox="0 0 11 11"><rect x="1" y="4.6" width="8.8" height="5.6" rx="2" fill="#3d5fc0"/><path d="M5.4 7.4 V1.2" stroke="#3d5fc0" stroke-width="1.5"/><path d="M5.4 2.4 V6.8" stroke="#fff" stroke-width="0.9"/><path d="M3.3 3.3 L5.4 1.1 L7.5 3.3" fill="none" stroke="#3d5fc0" stroke-width="1.2"/></svg>
<span style="position:absolute;left:857.80px;top:259.85px;font-size:10.2px;line-height:10.2px;font-weight:400;color:#3f5fbe;white-space:nowrap;letter-spacing:0.074px;">export</span>
<svg style="position:absolute;left:927.5px;top:259px;" width="11" height="10" viewBox="0 0 11 10"><path d="M0.8 1 H8.2 L5.6 4.6 V9 L3.6 7.6 V4.6 Z" fill="#3d5fc0"/><rect x="4.8" y="4.6" width="4.2" height="4.2" rx="1" fill="#3d5fc0" stroke="#fff" stroke-width="0.8"/></svg>
<span style="position:absolute;left:942.80px;top:259.45px;font-size:10.2px;line-height:10.2px;font-weight:400;color:#3f5fbe;white-space:nowrap;letter-spacing:-0.168px;">Filter</span>
<div style="position:absolute;left:191.6px;top:282px;width:800.4px;height:21.6px;background:#f7f8fa;border-radius:0px;"></div>
<span style="position:absolute;left:206.70px;top:289.71px;font-size:7.9px;line-height:7.9px;font-weight:400;color:#6f7177;white-space:nowrap;letter-spacing:0.409px;-webkit-text-stroke:0.28px #6f7177;">No.</span>
<svg style="position:absolute;left:222.7px;top:288.5px;" width="9" height="10" viewBox="0 0 9 10"><path d="M2.5 9 V1.2 M0.6 3 L2.5 1 L4.4 3" fill="none" stroke="#c3c5ca" stroke-width="0.9"/><path d="M6.5 1 V8.8 M4.6 7 L6.5 9 L8.4 7" fill="none" stroke="#c3c5ca" stroke-width="0.9"/></svg>
<span style="position:absolute;left:265.90px;top:289.71px;font-size:7.9px;line-height:7.9px;font-weight:400;color:#6f7177;white-space:nowrap;letter-spacing:0.388px;-webkit-text-stroke:0.28px #6f7177;">Fleet</span>
<svg style="position:absolute;left:287.9px;top:288.5px;" width="9" height="10" viewBox="0 0 9 10"><path d="M2.5 9 V1.2 M0.6 3 L2.5 1 L4.4 3" fill="none" stroke="#c3c5ca" stroke-width="0.9"/><path d="M6.5 1 V8.8 M4.6 7 L6.5 9 L8.4 7" fill="none" stroke="#c3c5ca" stroke-width="0.9"/></svg>
<span style="position:absolute;left:422.20px;top:289.71px;font-size:7.9px;line-height:7.9px;font-weight:400;color:#6f7177;white-space:nowrap;letter-spacing:0.393px;-webkit-text-stroke:0.28px #6f7177;">From</span>
<span style="position:absolute;left:500.50px;top:289.71px;font-size:7.9px;line-height:7.9px;font-weight:400;color:#6f7177;white-space:nowrap;letter-spacing:0.756px;-webkit-text-stroke:0.28px #6f7177;">To</span>
<span style="position:absolute;left:581.50px;top:289.71px;font-size:7.9px;line-height:7.9px;font-weight:400;color:#6f7177;white-space:nowrap;letter-spacing:0.167px;-webkit-text-stroke:0.28px #6f7177;">Created At</span>
<svg style="position:absolute;left:623.2px;top:288.5px;" width="9" height="10" viewBox="0 0 9 10"><path d="M2.5 9 V1.2 M0.6 3 L2.5 1 L4.4 3" fill="none" stroke="#c3c5ca" stroke-width="0.9"/><path d="M6.5 1 V8.8 M4.6 7 L6.5 9 L8.4 7" fill="none" stroke="#c3c5ca" stroke-width="0.9"/></svg>
<span style="position:absolute;left:663.50px;top:289.71px;font-size:7.9px;line-height:7.9px;font-weight:400;color:#6f7177;white-space:nowrap;letter-spacing:0.375px;-webkit-text-stroke:0.28px #6f7177;">Invoice Date</span>
<svg style="position:absolute;left:714.4px;top:288.5px;" width="9" height="10" viewBox="0 0 9 10"><path d="M2.5 9 V1.2 M0.6 3 L2.5 1 L4.4 3" fill="none" stroke="#c3c5ca" stroke-width="0.9"/><path d="M6.5 1 V8.8 M4.6 7 L6.5 9 L8.4 7" fill="none" stroke="#c3c5ca" stroke-width="0.9"/></svg>
<span style="position:absolute;left:754.70px;top:289.71px;font-size:7.9px;line-height:7.9px;font-weight:400;color:#6f7177;white-space:nowrap;letter-spacing:0.199px;-webkit-text-stroke:0.28px #6f7177;">Fleet Invoice No.</span>
<svg style="position:absolute;left:820.0px;top:288.5px;" width="9" height="10" viewBox="0 0 9 10"><path d="M2.5 9 V1.2 M0.6 3 L2.5 1 L4.4 3" fill="none" stroke="#c3c5ca" stroke-width="0.9"/><path d="M6.5 1 V8.8 M4.6 7 L6.5 9 L8.4 7" fill="none" stroke="#c3c5ca" stroke-width="0.9"/></svg>
<span style="position:absolute;left:860.80px;top:289.71px;font-size:7.9px;line-height:7.9px;font-weight:400;color:#6f7177;white-space:nowrap;letter-spacing:0.616px;-webkit-text-stroke:0.28px #6f7177;">Total Amount</span>
<svg style="position:absolute;left:916.0999999999999px;top:288.5px;" width="9" height="10" viewBox="0 0 9 10"><path d="M2.5 9 V1.2 M0.6 3 L2.5 1 L4.4 3" fill="none" stroke="#c3c5ca" stroke-width="0.9"/><path d="M6.5 1 V8.8 M4.6 7 L6.5 9 L8.4 7" fill="none" stroke="#c3c5ca" stroke-width="0.9"/></svg>
<span style="position:absolute;left:956.40px;top:289.71px;font-size:7.9px;line-height:7.9px;font-weight:400;color:#6f7177;white-space:nowrap;transform:scaleX(0.9293);transform-origin:0 50%;-webkit-text-stroke:0.28px #6f7177;">D</span>
<div style="position:absolute;left:191.6px;top:303.6px;width:800.4px;height:260px;background:#ffffff;border-radius:0px;"></div>
<div style="position:absolute;left:191.6px;top:334px;width:800.4px;height:1px;background:#eff0f2;border-radius:0px;"></div>
<span style="position:absolute;left:206.60px;top:315.25px;font-size:9.4px;line-height:9.4px;font-weight:400;color:#3a3b40;white-space:nowrap;letter-spacing:0.380px;">23455</span>
<span style="position:absolute;left:265.80px;top:315.25px;font-size:9.4px;line-height:9.4px;font-weight:400;color:#45474c;white-space:nowrap;letter-spacing:0.113px;">EcoFleet Solutions</span>
<span style="position:absolute;left:422.10px;top:315.25px;font-size:9.4px;line-height:9.4px;font-weight:400;color:#2f3034;white-space:nowrap;letter-spacing:-0.266px;">Nov 8, 2021</span>
<span style="position:absolute;left:500.50px;top:315.25px;font-size:9.4px;line-height:9.4px;font-weight:400;color:#2f3034;white-space:nowrap;letter-spacing:-0.300px;transform:scaleX(0.9580);transform-origin:0 50%;">Nov 12, 2021</span>
<span style="position:absolute;left:581.50px;top:315.25px;font-size:9.4px;line-height:9.4px;font-weight:400;color:#2f3034;white-space:nowrap;letter-spacing:-0.300px;transform:scaleX(0.9580);transform-origin:0 50%;">Nov 12, 2021</span>
<span style="position:absolute;left:663.50px;top:315.25px;font-size:9.4px;line-height:9.4px;font-weight:400;color:#2f3034;white-space:nowrap;letter-spacing:-0.300px;transform:scaleX(0.9580);transform-origin:0 50%;">Nov 12, 2021</span>
<span style="position:absolute;left:754.70px;top:315.25px;font-size:9.4px;line-height:9.4px;font-weight:400;color:#3a3b40;white-space:nowrap;letter-spacing:0.261px;">765376</span>
<span style="position:absolute;left:860.80px;top:315.25px;font-size:9.4px;line-height:9.4px;font-weight:400;color:#3a3b40;white-space:nowrap;letter-spacing:-0.300px;transform:scaleX(0.9322);transform-origin:0 50%;">1,200</span>
<span style="position:absolute;left:884.00px;top:315.25px;font-size:9.4px;line-height:9.4px;font-weight:400;color:#909297;white-space:nowrap;letter-spacing:-0.300px;transform:scaleX(0.8960);transform-origin:0 50%;">SAR</span>
<span style="position:absolute;left:956.40px;top:315.05px;font-size:9.8px;line-height:9.8px;font-weight:400;color:#2f3034;white-space:nowrap;transform:scaleX(0.8252);transform-origin:0 50%;">2</span>
<svg style="position:absolute;left:975.2px;top:314.5px;" width="4" height="11" viewBox="0 0 4 11"><circle cx="2" cy="2.8" r="0.8" fill="#2b2d33"/><circle cx="2" cy="5.5" r="0.8" fill="#2b2d33"/><circle cx="2" cy="8.2" r="0.8" fill="#2b2d33"/></svg>
<div style="position:absolute;left:191.6px;top:366px;width:800.4px;height:1px;background:#eff0f2;border-radius:0px;"></div>
<span style="position:absolute;left:206.60px;top:347.09px;font-size:9.4px;line-height:9.4px;font-weight:400;color:#3a3b40;white-space:nowrap;letter-spacing:0.380px;">45678</span>
<span style="position:absolute;left:265.80px;top:347.09px;font-size:9.4px;line-height:9.4px;font-weight:400;color:#45474c;white-space:nowrap;letter-spacing:0.277px;">GreenTech Fleet Innovation</span>
<span style="position:absolute;left:422.10px;top:347.09px;font-size:9.4px;line-height:9.4px;font-weight:400;color:#2f3034;white-space:nowrap;letter-spacing:-0.266px;">Nov 8, 2021</span>
<span style="position:absolute;left:500.50px;top:347.09px;font-size:9.4px;line-height:9.4px;font-weight:400;color:#2f3034;white-space:nowrap;letter-spacing:-0.300px;transform:scaleX(0.9580);transform-origin:0 50%;">Nov 12, 2021</span>
<span style="position:absolute;left:581.50px;top:347.09px;font-size:9.4px;line-height:9.4px;font-weight:400;color:#2f3034;white-space:nowrap;letter-spacing:-0.300px;transform:scaleX(0.9580);transform-origin:0 50%;">Nov 12, 2021</span>
<span style="position:absolute;left:663.50px;top:347.09px;font-size:9.4px;line-height:9.4px;font-weight:400;color:#2f3034;white-space:nowrap;letter-spacing:-0.300px;transform:scaleX(0.9580);transform-origin:0 50%;">Nov 12, 2021</span>
<span style="position:absolute;left:754.70px;top:347.09px;font-size:9.4px;line-height:9.4px;font-weight:400;color:#3a3b40;white-space:nowrap;letter-spacing:0.261px;">765376</span>
<span style="position:absolute;left:860.80px;top:347.09px;font-size:9.4px;line-height:9.4px;font-weight:400;color:#3a3b40;white-space:nowrap;letter-spacing:-0.117px;">2,200</span>
<span style="position:absolute;left:886.20px;top:347.09px;font-size:9.4px;line-height:9.4px;font-weight:400;color:#909297;white-space:nowrap;letter-spacing:-0.300px;transform:scaleX(0.8960);transform-origin:0 50%;">SAR</span>
<span style="position:absolute;left:956.40px;top:346.89px;font-size:9.8px;line-height:9.8px;font-weight:400;color:#2f3034;white-space:nowrap;">-</span>
<svg style="position:absolute;left:975.2px;top:346.34px;" width="4" height="11" viewBox="0 0 4 11"><circle cx="2" cy="2.8" r="0.8" fill="#2b2d33"/><circle cx="2" cy="5.5" r="0.8" fill="#2b2d33"/><circle cx="2" cy="8.2" r="0.8" fill="#2b2d33"/></svg>
<div style="position:absolute;left:191.6px;top:398px;width:800.4px;height:1px;background:#eff0f2;border-radius:0px;"></div>
<span style="position:absolute;left:206.60px;top:378.93px;font-size:9.4px;line-height:9.4px;font-weight:400;color:#3a3b40;white-space:nowrap;letter-spacing:0.380px;">34534</span>
<span style="position:absolute;left:265.80px;top:378.93px;font-size:9.4px;line-height:9.4px;font-weight:400;color:#45474c;white-space:nowrap;letter-spacing:0.052px;">EcoWise Fleet Services</span>
<span style="position:absolute;left:422.10px;top:378.93px;font-size:9.4px;line-height:9.4px;font-weight:400;color:#2f3034;white-space:nowrap;letter-spacing:-0.266px;">Nov 8, 2021</span>
<span style="position:absolute;left:500.50px;top:378.93px;font-size:9.4px;line-height:9.4px;font-weight:400;color:#2f3034;white-space:nowrap;letter-spacing:-0.300px;transform:scaleX(0.9580);transform-origin:0 50%;">Nov 12, 2021</span>
<span style="position:absolute;left:581.50px;top:378.93px;font-size:9.4px;line-height:9.4px;font-weight:400;color:#2f3034;white-space:nowrap;letter-spacing:-0.300px;transform:scaleX(0.9580);transform-origin:0 50%;">Nov 12, 2021</span>
<span style="position:absolute;left:663.50px;top:378.93px;font-size:9.4px;line-height:9.4px;font-weight:400;color:#2f3034;white-space:nowrap;letter-spacing:-0.300px;transform:scaleX(0.9580);transform-origin:0 50%;">Nov 12, 2021</span>
<span style="position:absolute;left:754.70px;top:378.93px;font-size:9.4px;line-height:9.4px;font-weight:400;color:#3a3b40;white-space:nowrap;">-</span>
<span style="position:absolute;left:860.80px;top:378.93px;font-size:9.4px;line-height:9.4px;font-weight:400;color:#3a3b40;white-space:nowrap;letter-spacing:0.722px;">900</span>
<span style="position:absolute;left:880.30px;top:378.93px;font-size:9.4px;line-height:9.4px;font-weight:400;color:#909297;white-space:nowrap;letter-spacing:-0.300px;transform:scaleX(0.8960);transform-origin:0 50%;">SAR</span>
<span style="position:absolute;left:956.40px;top:373.83px;font-size:9.8px;line-height:9.8px;font-weight:400;color:#2f3034;white-space:nowrap;transform:scaleX(0.8252);transform-origin:0 50%;">2</span>
<span style="position:absolute;left:956.30px;top:386.14px;font-size:7.6px;line-height:7.6px;font-weight:400;color:#e0463e;white-space:nowrap;transform:scaleX(0.8387);transform-origin:0 50%;-webkit-text-stroke:0.5px #e0463e;">R</span>
<div style="position:absolute;left:191.6px;top:430px;width:800.4px;height:1px;background:#eff0f2;border-radius:0px;"></div>
<span style="position:absolute;left:206.60px;top:410.77px;font-size:9.4px;line-height:9.4px;font-weight:400;color:#3a3b40;white-space:nowrap;letter-spacing:0.380px;">34567</span>
<span style="position:absolute;left:265.80px;top:410.77px;font-size:9.4px;line-height:9.4px;font-weight:400;color:#45474c;white-space:nowrap;letter-spacing:0.148px;">Sustainable Fleet Co.</span>
<span style="position:absolute;left:422.10px;top:410.77px;font-size:9.4px;line-height:9.4px;font-weight:400;color:#2f3034;white-space:nowrap;letter-spacing:-0.266px;">Nov 8, 2021</span>
<span style="position:absolute;left:500.50px;top:410.77px;font-size:9.4px;line-height:9.4px;font-weight:400;color:#2f3034;white-space:nowrap;letter-spacing:-0.300px;transform:scaleX(0.9580);transform-origin:0 50%;">Nov 12, 2021</span>
<span style="position:absolute;left:581.50px;top:410.77px;font-size:9.4px;line-height:9.4px;font-weight:400;color:#2f3034;white-space:nowrap;letter-spacing:-0.300px;transform:scaleX(0.9580);transform-origin:0 50%;">Nov 12, 2021</span>
<span style="position:absolute;left:663.50px;top:410.77px;font-size:9.4px;line-height:9.4px;font-weight:400;color:#2f3034;white-space:nowrap;letter-spacing:-0.300px;transform:scaleX(0.9580);transform-origin:0 50%;">Nov 12, 2021</span>
<span style="position:absolute;left:754.70px;top:410.77px;font-size:9.4px;line-height:9.4px;font-weight:400;color:#3a3b40;white-space:nowrap;letter-spacing:0.261px;">765376</span>
<span style="position:absolute;left:860.80px;top:405.77px;font-size:9.4px;line-height:9.4px;font-weight:400;color:#3a3b40;white-space:nowrap;letter-spacing:-0.300px;transform:scaleX(0.9461);transform-origin:0 50%;">3,100</span>
<span style="position:absolute;left:884.30px;top:405.77px;font-size:9.4px;line-height:9.4px;font-weight:400;color:#909297;white-space:nowrap;letter-spacing:-0.300px;transform:scaleX(0.8960);transform-origin:0 50%;">SAR</span>
<span style="position:absolute;left:860.80px;top:417.98px;font-size:8px;line-height:8px;font-weight:400;color:#1f8a55;white-space:nowrap;letter-spacing:0.091px;">Paid:</span>
<span style="position:absolute;left:881.00px;top:417.98px;font-size:8px;line-height:8px;font-weight:700;color:#1f8a55;white-space:nowrap;letter-spacing:-0.300px;transform:scaleX(0.9823);transform-origin:0 50%;">1,500 SAR</span>
<span style="position:absolute;left:956.40px;top:405.67px;font-size:9.8px;line-height:9.8px;font-weight:400;color:#2f3034;white-space:nowrap;transform:scaleX(0.8252);transform-origin:0 50%;">2</span>
<span style="position:absolute;left:956.30px;top:417.98px;font-size:7.6px;line-height:7.6px;font-weight:400;color:#2a9a6a;white-space:nowrap;transform:scaleX(0.8387);transform-origin:0 50%;-webkit-text-stroke:0.5px #2a9a6a;">R</span>
<svg style="position:absolute;left:975.2px;top:410.02px;" width="4" height="11" viewBox="0 0 4 11"><circle cx="2" cy="2.8" r="0.8" fill="#2b2d33"/><circle cx="2" cy="5.5" r="0.8" fill="#2b2d33"/><circle cx="2" cy="8.2" r="0.8" fill="#2b2d33"/></svg>
<div style="position:absolute;left:191.6px;top:462px;width:800.4px;height:1px;background:#eff0f2;border-radius:0px;"></div>
<span style="position:absolute;left:206.60px;top:442.61px;font-size:9.4px;line-height:9.4px;font-weight:400;color:#3a3b40;white-space:nowrap;letter-spacing:0.380px;">56789</span>
<span style="position:absolute;left:265.80px;top:442.61px;font-size:9.4px;line-height:9.4px;font-weight:400;color:#45474c;white-space:nowrap;letter-spacing:0.254px;">Earth-Friendly Fleet Product</span>
<span style="position:absolute;left:422.10px;top:442.61px;font-size:9.4px;line-height:9.4px;font-weight:400;color:#2f3034;white-space:nowrap;letter-spacing:-0.266px;">Nov 8, 2021</span>
<span style="position:absolute;left:500.50px;top:442.61px;font-size:9.4px;line-height:9.4px;font-weight:400;color:#2f3034;white-space:nowrap;letter-spacing:-0.300px;transform:scaleX(0.9580);transform-origin:0 50%;">Nov 12, 2021</span>
<span style="position:absolute;left:581.50px;top:442.61px;font-size:9.4px;line-height:9.4px;font-weight:400;color:#2f3034;white-space:nowrap;letter-spacing:-0.300px;transform:scaleX(0.9580);transform-origin:0 50%;">Nov 12, 2021</span>
<span style="position:absolute;left:663.50px;top:442.61px;font-size:9.4px;line-height:9.4px;font-weight:400;color:#2f3034;white-space:nowrap;letter-spacing:-0.300px;transform:scaleX(0.9580);transform-origin:0 50%;">Nov 12, 2021</span>
<span style="position:absolute;left:754.70px;top:442.61px;font-size:9.4px;line-height:9.4px;font-weight:400;color:#3a3b40;white-space:nowrap;letter-spacing:0.261px;">765376</span>
<span style="position:absolute;left:860.80px;top:442.61px;font-size:9.4px;line-height:9.4px;font-weight:400;color:#3a3b40;white-space:nowrap;letter-spacing:0.972px;">800</span>
<span style="position:absolute;left:880.80px;top:442.61px;font-size:9.4px;line-height:9.4px;font-weight:400;color:#909297;white-space:nowrap;letter-spacing:-0.300px;transform:scaleX(0.8960);transform-origin:0 50%;">SAR</span>
<span style="position:absolute;left:956.40px;top:437.51px;font-size:9.8px;line-height:9.8px;font-weight:400;color:#2f3034;white-space:nowrap;transform:scaleX(0.8252);transform-origin:0 50%;">2</span>
<span style="position:absolute;left:956.30px;top:449.82px;font-size:7.6px;line-height:7.6px;font-weight:400;color:#2a9a6a;white-space:nowrap;transform:scaleX(0.8387);transform-origin:0 50%;-webkit-text-stroke:0.5px #2a9a6a;">R</span>
<div style="position:absolute;left:191.6px;top:494px;width:800.4px;height:1px;background:#eff0f2;border-radius:0px;"></div>
<span style="position:absolute;left:206.60px;top:474.45px;font-size:9.4px;line-height:9.4px;font-weight:400;color:#3a3b40;white-space:nowrap;letter-spacing:0.380px;">78977</span>
<span style="position:absolute;left:265.80px;top:474.45px;font-size:9.4px;line-height:9.4px;font-weight:400;color:#45474c;white-space:nowrap;letter-spacing:0.189px;">Nature&#x27;s Fleet Pathway</span>
<span style="position:absolute;left:422.10px;top:474.45px;font-size:9.4px;line-height:9.4px;font-weight:400;color:#2f3034;white-space:nowrap;letter-spacing:-0.266px;">Nov 8, 2021</span>
<span style="position:absolute;left:500.50px;top:474.45px;font-size:9.4px;line-height:9.4px;font-weight:400;color:#2f3034;white-space:nowrap;letter-spacing:-0.300px;transform:scaleX(0.9580);transform-origin:0 50%;">Nov 12, 2021</span>
<span style="position:absolute;left:581.50px;top:474.45px;font-size:9.4px;line-height:9.4px;font-weight:400;color:#2f3034;white-space:nowrap;letter-spacing:-0.300px;transform:scaleX(0.9580);transform-origin:0 50%;">Nov 12, 2021</span>
<span style="position:absolute;left:663.50px;top:474.45px;font-size:9.4px;line-height:9.4px;font-weight:400;color:#2f3034;white-space:nowrap;letter-spacing:-0.300px;transform:scaleX(0.9580);transform-origin:0 50%;">Nov 12, 2021</span>
<span style="position:absolute;left:754.70px;top:474.45px;font-size:9.4px;line-height:9.4px;font-weight:400;color:#3a3b40;white-space:nowrap;letter-spacing:1.200px;">--</span>
<span style="position:absolute;left:860.80px;top:474.45px;font-size:9.4px;line-height:9.4px;font-weight:400;color:#3a3b40;white-space:nowrap;letter-spacing:-0.300px;transform:scaleX(0.9922);transform-origin:0 50%;">3,120</span>
<span style="position:absolute;left:885.30px;top:474.45px;font-size:9.4px;line-height:9.4px;font-weight:400;color:#909297;white-space:nowrap;letter-spacing:-0.300px;transform:scaleX(0.8960);transform-origin:0 50%;">SAR</span>
<span style="position:absolute;left:956.40px;top:474.25px;font-size:9.8px;line-height:9.8px;font-weight:400;color:#2f3034;white-space:nowrap;transform:scaleX(0.8252);transform-origin:0 50%;">2</span>
<svg style="position:absolute;left:975.2px;top:473.7px;" width="4" height="11" viewBox="0 0 4 11"><circle cx="2" cy="2.8" r="0.8" fill="#2b2d33"/><circle cx="2" cy="5.5" r="0.8" fill="#2b2d33"/><circle cx="2" cy="8.2" r="0.8" fill="#2b2d33"/></svg>
<div style="position:absolute;left:191.6px;top:525px;width:800.4px;height:1px;background:#eff0f2;border-radius:0px;"></div>
<span style="position:absolute;left:206.60px;top:506.29px;font-size:9.4px;line-height:9.4px;font-weight:400;color:#3a3b40;white-space:nowrap;letter-spacing:0.380px;">89789</span>
<span style="position:absolute;left:265.80px;top:506.29px;font-size:9.4px;line-height:9.4px;font-weight:400;color:#45474c;white-space:nowrap;letter-spacing:0.223px;">PlanetCare Fleet Solutions</span>
<span style="position:absolute;left:422.10px;top:506.29px;font-size:9.4px;line-height:9.4px;font-weight:400;color:#2f3034;white-space:nowrap;letter-spacing:-0.266px;">Nov 8, 2021</span>
<span style="position:absolute;left:500.50px;top:506.29px;font-size:9.4px;line-height:9.4px;font-weight:400;color:#2f3034;white-space:nowrap;letter-spacing:-0.300px;transform:scaleX(0.9580);transform-origin:0 50%;">Nov 12, 2021</span>
<span style="position:absolute;left:581.50px;top:506.29px;font-size:9.4px;line-height:9.4px;font-weight:400;color:#2f3034;white-space:nowrap;letter-spacing:-0.300px;transform:scaleX(0.9580);transform-origin:0 50%;">Nov 12, 2021</span>
<span style="position:absolute;left:663.50px;top:506.29px;font-size:9.4px;line-height:9.4px;font-weight:400;color:#2f3034;white-space:nowrap;letter-spacing:-0.300px;transform:scaleX(0.9580);transform-origin:0 50%;">Nov 12, 2021</span>
<span style="position:absolute;left:754.70px;top:506.29px;font-size:9.4px;line-height:9.4px;font-weight:400;color:#3a3b40;white-space:nowrap;letter-spacing:1.200px;">--</span>
<span style="position:absolute;left:860.80px;top:506.29px;font-size:9.4px;line-height:9.4px;font-weight:400;color:#3a3b40;white-space:nowrap;letter-spacing:-0.300px;transform:scaleX(0.9461);transform-origin:0 50%;">1,600</span>
<span style="position:absolute;left:884.30px;top:506.29px;font-size:9.4px;line-height:9.4px;font-weight:400;color:#909297;white-space:nowrap;letter-spacing:-0.300px;transform:scaleX(0.8960);transform-origin:0 50%;">SAR</span>
<span style="position:absolute;left:956.40px;top:506.09px;font-size:9.8px;line-height:9.8px;font-weight:400;color:#2f3034;white-space:nowrap;transform:scaleX(0.8252);transform-origin:0 50%;">2</span>
<div style="position:absolute;left:191.6px;top:557px;width:800.4px;height:1px;background:#eff0f2;border-radius:0px;"></div>
<span style="position:absolute;left:206.60px;top:538.13px;font-size:9.4px;line-height:9.4px;font-weight:400;color:#3a3b40;white-space:nowrap;letter-spacing:0.380px;">46546</span>
<span style="position:absolute;left:265.80px;top:538.13px;font-size:9.4px;line-height:9.4px;font-weight:400;color:#45474c;white-space:nowrap;letter-spacing:0.173px;">Revolutionary Green Fleet</span>
<span style="position:absolute;left:422.10px;top:538.13px;font-size:9.4px;line-height:9.4px;font-weight:400;color:#2f3034;white-space:nowrap;letter-spacing:-0.266px;">Nov 8, 2021</span>
<span style="position:absolute;left:500.50px;top:538.13px;font-size:9.4px;line-height:9.4px;font-weight:400;color:#2f3034;white-space:nowrap;letter-spacing:-0.300px;transform:scaleX(0.9580);transform-origin:0 50%;">Nov 12, 2021</span>
<span style="position:absolute;left:581.50px;top:538.13px;font-size:9.4px;line-height:9.4px;font-weight:400;color:#2f3034;white-space:nowrap;letter-spacing:-0.300px;transform:scaleX(0.9580);transform-origin:0 50%;">Nov 12, 2021</span>
<span style="position:absolute;left:663.50px;top:538.13px;font-size:9.4px;line-height:9.4px;font-weight:400;color:#2f3034;white-space:nowrap;letter-spacing:-0.300px;transform:scaleX(0.9580);transform-origin:0 50%;">Nov 12, 2021</span>
<span style="position:absolute;left:754.70px;top:538.13px;font-size:9.4px;line-height:9.4px;font-weight:400;color:#3a3b40;white-space:nowrap;letter-spacing:0.261px;">765376</span>
<span style="position:absolute;left:860.80px;top:538.13px;font-size:9.4px;line-height:9.4px;font-weight:400;color:#3a3b40;white-space:nowrap;letter-spacing:-0.300px;transform:scaleX(0.9691);transform-origin:0 50%;">4,100</span>
<span style="position:absolute;left:884.80px;top:538.13px;font-size:9.4px;line-height:9.4px;font-weight:400;color:#909297;white-space:nowrap;letter-spacing:-0.300px;transform:scaleX(0.8960);transform-origin:0 50%;">SAR</span>
<span style="position:absolute;left:956.40px;top:537.93px;font-size:9.8px;line-height:9.8px;font-weight:400;color:#2f3034;white-space:nowrap;transform:scaleX(0.8252);transform-origin:0 50%;">2</span>
</body></html>
